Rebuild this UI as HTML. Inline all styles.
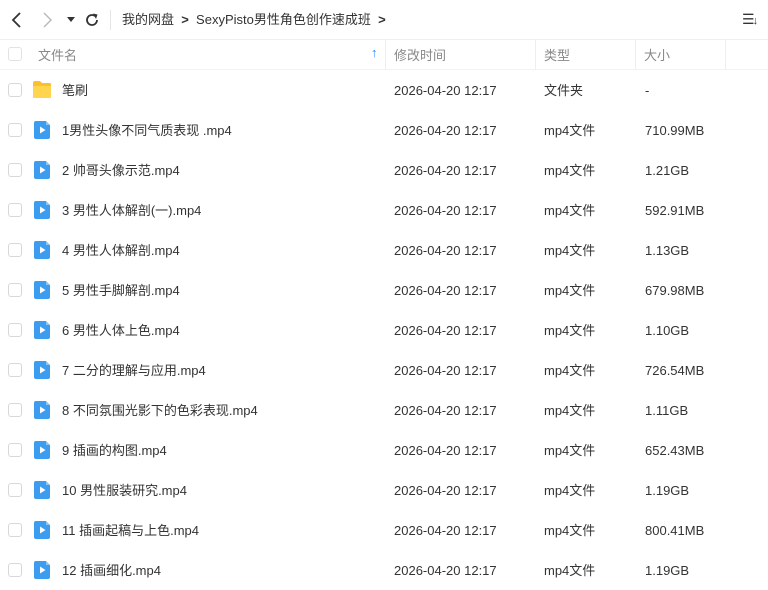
<!DOCTYPE html>
<html><head><meta charset="utf-8"><style>
*{margin:0;padding:0;box-sizing:border-box}
body{width:768px;height:589px;background:#fff;font-family:"Liberation Sans","Noto Sans CJK SC",sans-serif;font-size:13px;color:#333;position:relative;overflow:hidden}
.abs{position:absolute}
.hdr{position:absolute;top:39px;left:0;width:768px;height:31px;border-top:1px solid #eef0f3;border-bottom:1px solid #f2f3f5;color:#888}
.sep{position:absolute;top:0;height:30px;width:1px;background:#eceef1}
.cb{position:absolute;left:8px;width:14px;height:14px;border:1px solid #d8d8d8;border-radius:3px;background:#fff}
.row{position:absolute;left:0;width:768px;height:40px}
.row span{position:absolute;top:13px;line-height:16px}
</style></head><body>
<svg class="abs" style="left:10px;top:12px" width="14" height="16" viewBox="0 0 14 16"><path d="M10 1 L3 8 L10 15" stroke="#333" stroke-width="1.8" fill="none"/></svg>
<svg class="abs" style="left:40px;top:12px" width="14" height="16" viewBox="0 0 14 16"><path d="M4 1 L11 8 L4 15" stroke="#bbb" stroke-width="1.5" fill="none"/></svg>
<svg class="abs" style="left:67px;top:17px" width="8" height="6"><path d="M0 0H8L4 5Z" fill="#333"/></svg>
<svg class="abs" style="left:84px;top:12px" width="16" height="16" viewBox="0 0 16 16"><path d="M13 8A5 5 0 1 1 11 4" stroke="#333" stroke-width="1.8" fill="none"/><path d="M9 1.5L13.5 2.5L12 7Z" fill="#333"/></svg>
<div class="abs" style="left:110px;top:10px;width:1px;height:20px;background:#e5e5e5"></div>
<div class="abs" style="left:122px;top:11px;font-size:13px;color:#333;line-height:18px">我的网盘 &nbsp;<b style="font-weight:bold">&gt;</b>&nbsp; SexyPisto男性角色创作速成班 &nbsp;<b>&gt;</b></div>
<div class="abs" style="left:742px;top:11px;font-size:14px;color:#333">☰<span style="font-size:11px;margin-left:-2px">↓</span></div>
<div class="hdr">
<div class="cb" style="top:7px;border-color:#e2e2e2"></div>
<span class="abs" style="left:38px;top:5px">文件名</span>
<span class="abs" style="left:371px;top:5px;color:#1e90ff;font-size:13px;font-weight:bold">↑</span>
<div class="sep" style="left:385px"></div>
<span class="abs" style="left:394px;top:5px">修改时间</span>
<div class="sep" style="left:535px"></div>
<span class="abs" style="left:544px;top:5px">类型</span>
<div class="sep" style="left:635px"></div>
<span class="abs" style="left:644px;top:5px">大小</span>
<div class="sep" style="left:725px"></div>
</div>
<div id="rows"></div>
<script>
var d=[["笔刷","文件夹","-"],["1男性头像不同气质表现 .mp4","mp4文件","710.99MB"],["2 帅哥头像示范.mp4","mp4文件","1.21GB"],["3 男性人体解剖(一).mp4","mp4文件","592.91MB"],["4 男性人体解剖.mp4","mp4文件","1.13GB"],["5 男性手脚解剖.mp4","mp4文件","679.98MB"],["6 男性人体上色.mp4","mp4文件","1.10GB"],["7 二分的理解与应用.mp4","mp4文件","726.54MB"],["8 不同氛围光影下的色彩表现.mp4","mp4文件","1.11GB"],["9 插画的构图.mp4","mp4文件","652.43MB"],["10 男性服装研究.mp4","mp4文件","1.19GB"],["11 插画起稿与上色.mp4","mp4文件","800.41MB"],["12 插画细化.mp4","mp4文件","1.19GB"]];
var h="";d.forEach(function(r,i){var t=70+i*40;
var ic=i==0?'<svg style="position:absolute;left:32px;top:10px" width="20" height="19"><path d="M1 3Q1 1 3 1H8L10 3H18Q19 3 19 5V17Q19 18 18 18H2Q1 18 1 17Z" fill="#fbc02d"/><path d="M1 6H19V17Q19 18 18 18H2Q1 18 1 17Z" fill="#ffd54f"/></svg>':'<svg style="position:absolute;left:33px;top:11px" width="18" height="18"><path d="M3 0H13L17 4V16Q17 18 15 18H3Q1 18 1 16V2Q1 0 3 0Z" fill="#3b9cf0"/><path d="M13 0V4H17Z" fill="#8cc6f7"/><path d="M7 5.5L12.5 9L7 12.5Z" fill="#fff"/></svg>';
h+='<div class="row" style="top:'+t+'px"><div class="cb" style="top:13px"></div>'+ic+'<span style="left:62px">'+r[0]+'</span><span style="left:394px">2026-04-20 12:17</span><span style="left:544px">'+r[1]+'</span><span style="left:645px">'+r[2]+'</span></div>';});
document.getElementById("rows").innerHTML=h;
</script>
</body></html>
